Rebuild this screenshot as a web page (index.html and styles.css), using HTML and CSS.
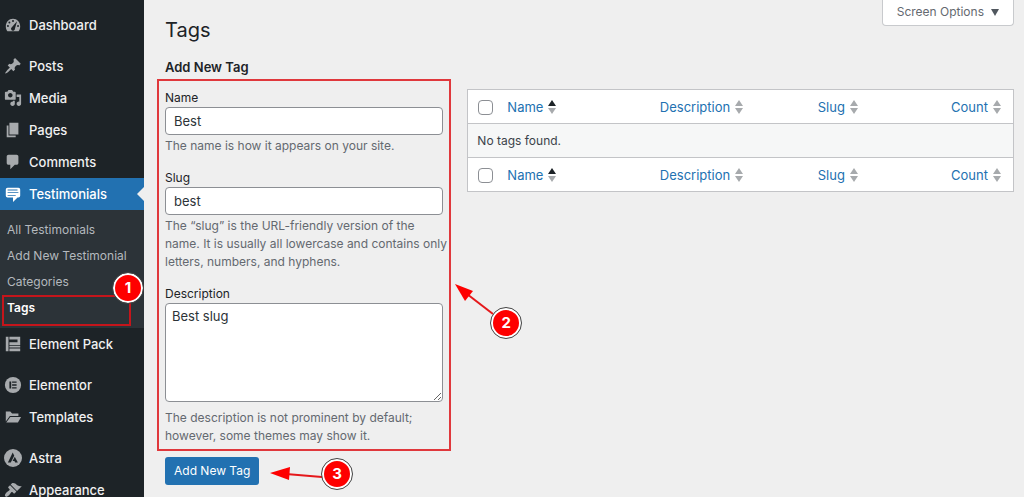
FILE: index.html
```html
<!DOCTYPE html>
<html lang="en">
<head>
<meta charset="utf-8">
<meta name="viewport" content="width=device-width, initial-scale=1">
<title>Tags</title>
<link rel="stylesheet" href="styles.css">
</head>
<body>
<div class="app">
  <nav class="sidebar" aria-label="Main menu">
    <ul class="menu">
      <li><a class="item" href="#"><svg class="icon" viewBox="0 0 20 20"><path d="M3.8 17h12.4c1.1-1.5 1.8-3.400 1.800-5.400C18 6.600 14.400 3 10 3s-8 3.600-8 8.600c0 2 .7 3.900 1.800 5.400z"/><g class="cut"><circle cx="10" cy="5.500" r="1.100"/><circle cx="6" cy="7.200" r="1.100"/><circle cx="4.400" cy="11" r="1.100"/><circle cx="15.600" cy="11" r="1.100"/><path d="M14.500 5.700l-2.300 8.300a2.200 2.200 0 1 1-3.500-1.500z"/></g></svg>Dashboard</a></li>
    </ul>
    <ul class="menu">
      <li><a class="item" href="#"><svg class="icon" viewBox="0 0 20 20"><path d="M10.440 3.020l1.820-1.820 6.360 6.350-1.830 1.820c-1.050-.68-2.480-.57-3.410.36l-.75.75c-.92.930-1.040 2.350-.35 3.410l-1.830 1.820-2.410-2.410-2.800 2.790c-.42.420-3.380 2.710-3.800 2.290s1.860-3.390 2.280-3.810l2.790-2.790L4.100 9.360l1.830-1.820c1.050.690 2.480.570 3.400-.36l.75-.75c.930-.92 1.050-2.350.360-3.410z"/></svg>Posts</a></li>
      <li><a class="item" href="#"><svg class="icon" viewBox="0 0 20 20"><path fill-rule="evenodd" d="M13 11V4c0-.55-.45-1-1-1h-1.670L9 1H5L3.670 3H2c-.55 0-1 .45-1 1v7c0 .55.45 1 1 1h10c.55 0 1-.45 1-1zM7 4.500c1.380 0 2.500 1.120 2.500 2.500S8.380 9.500 7 9.500 4.500 8.380 4.500 7 5.620 4.500 7 4.500zM14 6h5v10.500c0 1.380-1.120 2.500-2.500 2.500S14 17.880 14 16.500s1.120-2.500 2.500-2.500c.17 0 .34.020.5.050V9h-3V6zm-4 8.050V13h2v3.500c0 1.380-1.120 2.500-2.500 2.500S7 17.880 7 16.500 8.120 14 9.500 14c.17 0 .34.020.5.050z"/></svg>Media</a></li>
      <li><a class="item" href="#"><svg class="icon" viewBox="0 0 20 20"><path d="M6 15V2h10v13H6zm-1 1h8v2H3V5h2v11z"/></svg>Pages</a></li>
      <li><a class="item" href="#"><svg class="icon" viewBox="0 0 20 20"><path d="M5 2h9c1.100 0 2 .9 2 2v7c0 1.100-.9 2-2 2h-2l-5 5v-5H5c-1.100 0-2-.9-2-2V4c0-1.100.9-2 2-2z"/></svg>Comments</a></li>
      <li>
        <a class="item current" href="#"><svg class="icon" viewBox="0 0 20 20"><path fill-rule="evenodd" d="M4 3h12a2 2 0 0 1 2 2v7a2 2 0 0 1-2 2h-1l-5 5v-5H4a2 2 0 0 1-2-2V5a2 2 0 0 1 2-2zm11 2H4v1h11V5zm1 3H4v1h12V8zm-3 3H4v1h9v-1z"/></svg>Testimonials</a>
        <ul class="submenu">
          <li><a href="#">All Testimonials</a></li>
          <li><a href="#">Add New Testimonial</a></li>
          <li><a href="#">Categories</a></li>
          <li class="marked"><a class="active" href="#" aria-current="page">Tags</a><span class="badge badge-one">1</span></li>
        </ul>
      </li>
      <li><a class="item" href="#"><svg class="icon" viewBox="0 0 20 20"><path d="M2 2h3v16H2zM6 2h12v9H9V8h6V5H6zM6 8h3v3H6zM6 12h12v2H6zM6 15h12v3H6z"/></svg>Element Pack</a></li>
    </ul>
    <ul class="menu">
      <li><a class="item" href="#"><svg class="icon" viewBox="0 0 20 20"><circle cx="10" cy="10" r="9"/><path class="cut" d="M6 6h2v8H6zM9 6h5v1.600H9zM9 9.200h5v1.600H9zM9 12.400h5V14H9z"/></svg>Elementor</a></li>
      <li><a class="item" href="#"><svg class="icon" viewBox="0 0 20 20"><path d="M2 4h5l2 2h7v3H6.500L2 15zM7 10h12l-3.500 6H2.500z"/></svg>Templates</a></li>
    </ul>
    <ul class="menu">
      <li><a class="item" href="#"><svg class="icon" viewBox="0 0 20 20"><circle cx="10" cy="10" r="10"/><path class="cut" d="M9.700 4l1.700 3.400L7.500 15H4.300zM12 8.600l3.400 6.400h-3l-.8-1.700H9.500z"/></svg>Astra</a></li>
      <li><a class="item" href="#"><svg class="icon" viewBox="0 0 20 20"><path d="M14.480 11.060L7.410 3.990l1.500-1.500c.5-.56 2.300-.47 3.510.32 1.210.8 1.430 1.280 2.910 2.100 1.180.64 2.450 1.260 4.450.85zm-.71.71L6.700 4.700 4.930 6.470c-.39.39-.39 1.020 0 1.410l1.060 1.060c.39.39.39 1.030 0 1.420-.6.6-1.430 1.110-2.210 1.690-.35.26-.7.53-1.010.84C1.430 14.230.4 16.080 1.400 17.070c.99 1 2.840-.03 4.180-1.360.31-.31.58-.66.85-1.020.57-.78 1.080-1.610 1.690-2.210.39-.39 1.020-.39 1.410 0l1.060 1.060c.39.39 1.020.39 1.410 0z"/></svg>Appearance</a></li>
    </ul>
  </nav>

  <main class="content">
    <header class="top">
      <h1>Tags</h1>
      <button class="screen-options" type="button">Screen Options <svg class="caret" viewBox="0 0 8 8"><path d="M0 1h8L4 8z"/></svg></button>
    </header>
    <div class="columns">
      <form class="tag-form">
        <h2>Add New Tag</h2>
        <div class="fields">
          <div class="field">
            <label for="name">Name</label>
            <input id="name" type="text" value="Best">
            <p>The name is how it appears on your site.</p>
          </div>
          <div class="field">
            <label for="slug">Slug</label>
            <input id="slug" type="text" value="best">
            <p>The “slug” is the URL-friendly version of the name. It is usually all lowercase and contains only letters, numbers, and hyphens.</p>
          </div>
          <div class="field">
            <label for="description">Description</label>
            <textarea id="description" rows="5">Best slug</textarea>
            <p>The description is not prominent by default; however, some themes may show it.</p>
          </div>
          <div class="callout callout-two">
            <svg class="arrow" viewBox="0 0 40 32"><path class="line" d="M12 10L38 30"/><path d="M0 0l18 7-8 10z"/></svg>
            <span class="badge">2</span>
          </div>
        </div>
        <div class="submit">
          <button class="primary" type="button">Add New Tag</button>
          <div class="callout callout-three">
            <svg class="arrow arrow-flat" viewBox="0 0 52 14"><path class="line" d="M16 7l36 3"/><path d="M0 6l20-6-1 13z"/></svg>
            <span class="badge">3</span>
          </div>
        </div>
      </form>

      <table class="tags">
        <thead>
          <tr>
            <td class="check"><input type="checkbox" aria-label="Select all"></td>
            <th class="name"><a href="#">Name <svg class="sort" viewBox="0 0 8 14"><path class="up" d="M0 6l4-6 4 6z"/><path d="M0 8h8l-4 6z"/></svg></a></th>
            <th class="desc"><a href="#">Description <svg class="sort" viewBox="0 0 8 14"><path d="M0 6l4-6 4 6zM0 8h8l-4 6z"/></svg></a></th>
            <th class="slug"><a href="#">Slug <svg class="sort" viewBox="0 0 8 14"><path d="M0 6l4-6 4 6zM0 8h8l-4 6z"/></svg></a></th>
            <th class="count"><a href="#">Count <svg class="sort" viewBox="0 0 8 14"><path d="M0 6l4-6 4 6zM0 8h8l-4 6z"/></svg></a></th>
          </tr>
        </thead>
        <tbody>
          <tr><td class="empty" colspan="5">No tags found.</td></tr>
        </tbody>
        <tfoot>
          <tr>
            <td class="check"><input type="checkbox" aria-label="Select all"></td>
            <th><a href="#">Name <svg class="sort" viewBox="0 0 8 14"><path class="up" d="M0 6l4-6 4 6z"/><path d="M0 8h8l-4 6z"/></svg></a></th>
            <th><a href="#">Description <svg class="sort" viewBox="0 0 8 14"><path d="M0 6l4-6 4 6zM0 8h8l-4 6z"/></svg></a></th>
            <th><a href="#">Slug <svg class="sort" viewBox="0 0 8 14"><path d="M0 6l4-6 4 6zM0 8h8l-4 6z"/></svg></a></th>
            <th class="count"><a href="#">Count <svg class="sort" viewBox="0 0 8 14"><path d="M0 6l4-6 4 6zM0 8h8l-4 6z"/></svg></a></th>
          </tr>
        </tfoot>
      </table>
    </div>
  </main>
</div>
</body>
</html>
```
FILE: styles.css
```css
* { box-sizing: border-box; }
body {
  margin: 0;
  background: #efefef;
  color: #3c434a;
  font: 12px/18px Inter, "Liberation Sans", sans-serif;
}
h1, h2, p, ul { margin: 0; padding: 0; }
ul { list-style: none; }
a { text-decoration: none; }
input, textarea, button { font: inherit; }

.app { display: flex; height: 100vh; overflow: hidden; }

.sidebar {
  flex: 0 0 144px;
  display: flex;
  flex-direction: column;
  gap: 9px;
  padding-top: 9px;
  background: #1d2327;
}
.item {
  display: flex;
  align-items: center;
  gap: 7px;
  height: 32px;
  padding-left: 4px;
  color: #f0f0f1;
  font-size: 13px;
  font-weight: 500;
}
.icon { width: 18px; height: 18px; fill: #a7aaad; }
.cut { fill: #1d2327; }
.current { position: relative; background: #2271b1; color: #fff; }
.current .icon { fill: #fff; }
.current::after {
  content: "";
  position: absolute;
  right: 0;
  top: 9px;
  border: 7px solid transparent;
  border-left-width: 0;
  border-right-color: #efefef;
}
.submenu { padding: 7px 0; background: #2c3338; }
.submenu a { display: block; padding: 4px 7px; color: #b4b9be; }
.submenu .active { color: #fff; font-weight: 600; }
.marked { position: relative; }
.marked::before {
  content: "";
  position: absolute;
  inset: 0 13px -5px 2px;
  border: 2px solid #c5151b;
}

.content {
  flex: 1;
  min-width: 0;
  padding: 0 10px 0 13px;
}
.top {
  display: flex;
  align-items: flex-start;
  justify-content: space-between;
  height: 57px;
  padding-left: 8px;
}
h1 {
  padding-top: 16px;
  color: #1d2327;
  font-size: 20px;
  font-weight: 400;
  line-height: 28px;
}
.screen-options {
  display: flex;
  align-items: center;
  gap: 7px;
  height: 26px;
  padding: 0 14px 2px;
  border: 1px solid #c8cacd;
  border-top: 0;
  border-radius: 0 0 4px 4px;
  background: #fff;
  color: #646970;
}
.caret { width: 8px; height: 8px; fill: #50575e; }

.columns {
  display: grid;
  grid-template-columns: minmax(0, 35fr) minmax(0, 65fr);
  align-items: start;
  gap: 16px;
}
h2 {
  padding: 1px 8px 3px;
  color: #1d2327;
  font-size: 13px;
  font-weight: 600;
  line-height: 18px;
}
.fields {
  position: relative;
  display: flex;
  flex-direction: column;
  gap: 14px;
  padding: 8px 6px 4px;
  border: 2px solid #e0383c;
}
.field label { display: block; color: #1d2327; }
.field input, .field textarea {
  display: block;
  width: 100%;
  border: 1px solid #8c8f94;
  border-radius: 4px;
  background: #fff;
  color: #2c3338;
  font-size: 13px;
}
.field input { height: 28px; padding: 0 8px; }
.field textarea { height: 99px; padding: 3px 6px; }
.field p { margin-right: -6px; padding-top: 2px; color: #646970; }
.field textarea + p { padding-top: 7px; }

.submit { position: relative; padding: 6px 8px; }
.primary {
  height: 28px;
  padding: 0 9px;
  border: 0;
  border-radius: 3px;
  background: #2271b1;
  color: #fff;
}

.badge {
  display: grid;
  place-items: center;
  width: 30px;
  height: 30px;
  border: 2px solid #fff;
  border-radius: 50%;
  outline: 1px solid #444;
  background: #fe0000;
  color: #fff;
  font-size: 15px;
  font-weight: 700;
}
.badge-one { position: absolute; right: 1px; top: -22px; }
.callout { position: absolute; display: flex; }
.callout-two { left: 100%; top: 203px; align-items: flex-end; padding-left: 6px; }
.callout-two .badge { margin: 24px 0 0 -4px; }
.callout-three { left: 113px; top: 8px; align-items: center; }
.arrow { width: 40px; height: 32px; align-self: flex-start; fill: #fe0000; }
.arrow-flat { width: 52px; height: 14px; align-self: center; }
.line { stroke: #e5181b; stroke-width: 2; }

.tags {
  width: 100%;
  margin-top: 32px;
  border: 1px solid #c3c4c7;
  border-spacing: 0;
  background: #fff;
  table-layout: fixed;
}
.tags td, .tags th { height: 33px; padding: 0; text-align: left; font-weight: 400; }
.tags a { display: flex; align-items: center; gap: 5px; color: #2271b1; font-size: 13px; }
.tags .check { width: 39px; padding-left: 10px; }
.tags .check input {
  display: block;
  appearance: none;
  width: 15px;
  height: 15px;
  margin: 2px 0 0;
  border: 1px solid #8c8f94;
  border-radius: 4px;
  background: #fff;
}
.tags .name { width: 28%; }
.tags .desc { width: 29%; }
.tags .slug { width: 22%; }
.tags .count a { justify-content: flex-end; padding-right: 12px; }
.tags .empty { height: 35px; padding-left: 9px; border: solid #c3c4c7; border-width: 1px 0; background: #f6f7f7; }
.sort { width: 8px; height: 14px; fill: #a7aaad; }
.up { fill: #1d2327; }
```
